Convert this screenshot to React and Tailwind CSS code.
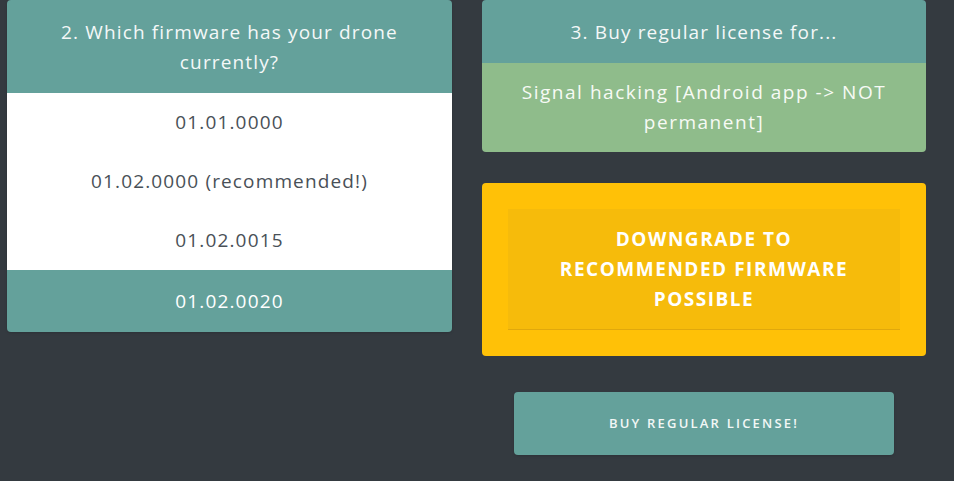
import React from "react";

const versions = ["01.01.0000", "01.02.0000 (recommended!)", "01.02.0015"];

const App = () => {
  return (
    <div
      className="w-[954px] h-[481px] bg-[#343a40] overflow-hidden flex items-start gap-[30px] pl-[7px]"
      style={{ fontFamily: '"Open Sans", "Noto Sans", sans-serif' }}
    >
      {/* Firmware list */}
      <div className="w-[445px] rounded-[4px] overflow-hidden shadow-sm">
        <div className="bg-[#64a19b] text-[#f4f8f8] text-center text-[19px] leading-[30px] tracking-[0.06em] pt-[17px] pb-[16px] px-10">
          2. Which firmware has your drone currently?
        </div>
        {versions.map((v) => (
          <div
            key={v}
            className="bg-white text-[#495057] text-center text-[19px] leading-[30px] tracking-[0.06em] h-[59px] flex items-center justify-center pb-[2px]"
          >
            {v}
          </div>
        ))}
        <div className="bg-[#64a19b] text-white text-center text-[19px] leading-[30px] tracking-[0.06em] h-[62px] flex items-center justify-center">
          01.02.0020
        </div>
      </div>

      {/* License column */}
      <div className="w-[444px] flex flex-col">
        <div className="rounded-[4px] overflow-hidden">
          <div className="bg-[#64a19b] text-[#f4f8f8] text-center text-[19px] leading-[30px] tracking-[0.06em] pt-[17px] pb-[16px]">
            3. Buy regular license for...
          </div>
          <div className="bg-[#8fbc8b] text-[#f7faf5] text-center text-[19px] leading-[30px] tracking-[0.08em] pt-[14px] pb-[15px] px-8">
            Signal hacking [Android app -&gt; NOT permanent]
          </div>
        </div>

        <div className="mt-[31px] bg-[#ffc107] rounded-[4px] p-[26px]">
          <div className="bg-[#f6bb0b] border-b border-[#e0a80c] text-white font-bold uppercase text-center text-[19px] leading-[30px] tracking-[0.08em] py-[15px] px-12">
            Downgrade to recommended firmware possible
          </div>
        </div>

        <div className="mt-[36px] flex justify-center">
          <button className="w-[380px] h-[63px] bg-[#64a19b] rounded-[4px] text-[#f2f7f6] text-[13px] font-semibold uppercase tracking-[0.17em] shadow-sm">
            Buy regular license!
          </button>
        </div>
      </div>
    </div>
  );
};

export default App;
